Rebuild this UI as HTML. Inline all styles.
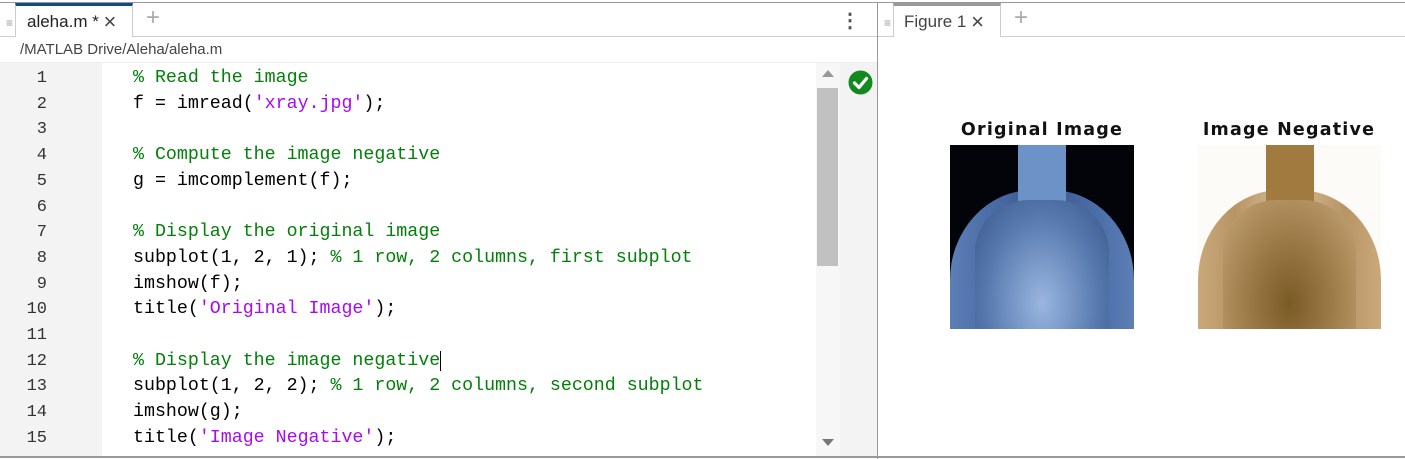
<!DOCTYPE html>
<html><head><style>
body{margin:0;width:1405px;height:459px;overflow:hidden;background:#fff;font-family:"Liberation Sans",sans-serif;position:relative}
.a{position:absolute}
.code{font-family:"Liberation Mono",monospace;font-size:18.3px;color:#000;white-space:pre;line-height:25.7px}
.c{color:#028009}.s{color:#a709f5}
.ln{font-family:"Liberation Mono",monospace;font-size:17px;color:#333;line-height:25.7px;text-align:right;width:47px}
.t{font-family:'DejaVu Sans',sans-serif;font-weight:bold;font-size:17.5px;letter-spacing:1.2px;color:#111;text-align:center;width:240px}
.x{font-size:22px;line-height:17px;vertical-align:-2px}
</style></head><body>
<div class="a" style="left:0;top:2px;width:1405px;height:1px;background:#999"></div>
<div class="a" style="left:0;top:36px;width:877px;height:1px;background:#ccc"></div>
<div class="a" style="left:6px;top:16px;color:#999;font-size:12px">≡</div>
<div class="a" style="left:15px;top:3px;width:118px;height:34px;background:#fff;border-left:1px solid #ccc;border-right:1px solid #ccc;border-top:3px solid #0f4c81;box-sizing:border-box"></div>
<div class="a" style="left:27px;top:12px;font-size:17px;line-height:20px;color:#222">aleha.m * <span class="x" style="color:#444">×</span></div>
<div class="a" style="left:146px;top:4px;font-size:24px;color:#aaa">+</div>
<div class="a" style="left:840px;top:8px;font-size:20px;color:#555;font-weight:bold">⋮</div>
<div class="a" style="left:20px;top:41px;font-size:15px;color:#444">/MATLAB Drive/Aleha/aleha.m</div>
<div class="a" style="left:0;top:62px;width:877px;height:1px;background:#eee"></div>
<div class="a" style="left:0;top:63px;width:102px;height:394px;background:#f3f3f3"></div>
<div class="a ln" style="left:0;top:66px">1<br>2<br>3<br>4<br>5<br>6<br>7<br>8<br>9<br>10<br>11<br>12<br>13<br>14<br>15</div>
<div class="a code" style="left:133px;top:66px"><span class="c">% Read the image</span>
f = imread(<span class="s">'xray.jpg'</span>);

<span class="c">% Compute the image negative</span>
g = imcomplement(f);

<span class="c">% Display the original image</span>
subplot(1, 2, 1); <span class="c">% 1 row, 2 columns, first subplot</span>
imshow(f);
title(<span class="s">'Original Image'</span>);

<span class="c">% Display the image negative</span><span style="border-left:1px solid #000"></span>
subplot(1, 2, 2); <span class="c">% 1 row, 2 columns, second subplot</span>
imshow(g);
title(<span class="s">'Image Negative'</span>);</div>
<div class="a" style="left:816px;top:63px;width:24px;height:394px;background:#f7f7f7"></div>
<div class="a" style="left:817px;top:88px;width:21px;height:178px;background:#c1c1c1"></div>
<div class="a" style="left:822px;top:70px;width:0;height:0;border-left:6px solid transparent;border-right:6px solid transparent;border-bottom:7px solid #999"></div>
<div class="a" style="left:822px;top:439px;width:0;height:0;border-left:6px solid transparent;border-right:6px solid transparent;border-top:7px solid #777"></div>
<div class="a" style="left:840px;top:63px;width:37px;height:394px;background:#f3f3f3"></div>
<svg class="a" style="left:848px;top:70px" width="25" height="25"><circle cx="12.5" cy="12.5" r="12" fill="#138a1f"/><path d="M6.5 13 L11 17.5 L18.5 8.5" stroke="#fff" stroke-width="3.2" fill="none" stroke-linecap="round" stroke-linejoin="round"/></svg>
<div class="a" style="left:877px;top:2px;width:1px;height:457px;background:#999"></div>
<div class="a" style="left:0;top:456px;width:1405px;height:2px;background:#999"></div>
<div class="a" style="left:878px;top:36px;width:527px;height:1px;background:#ccc"></div>
<div class="a" style="left:884px;top:16px;color:#999;font-size:12px">≡</div>
<div class="a" style="left:893px;top:3px;width:108px;height:34px;background:#fff;border-left:1px solid #ccc;border-right:1px solid #ccc;border-top:3px solid #999;box-sizing:border-box"></div>
<div class="a" style="left:904px;top:12px;font-size:17px;line-height:20px;color:#444">Figure 1 <span class="x">×</span></div>
<div class="a" style="left:1014px;top:4px;font-size:24px;color:#aaa">+</div>
<div class="a t" style="left:922px;top:120px">Original Image</div>
<div class="a t" style="left:1169px;top:120px">Image Negative</div>
<div class="a" style="left:950px;top:145px;width:184px;height:184px;background:#02040a;overflow:hidden">
 <div class="a" style="left:0;top:45px;width:184px;height:200px;border-radius:45% 45% 0 0;background:linear-gradient(90deg,#5d7fb5,#4c6ea8 20%,#38568a 50%,#4c6ea8 80%,#5d7fb5)"></div>
 <div class="a" style="left:68px;top:0;width:48px;height:184px;background:#6d92c8"></div>
 <div class="a" style="left:25px;top:55px;width:134px;height:129px;border-radius:40% 40% 0 0;background:radial-gradient(ellipse at 50% 80%,#9ab6e0,#5678ad 60%,#3a5788)"></div>
</div>
<div class="a" style="left:1198px;top:145px;width:183px;height:184px;background:#fdfbf8;overflow:hidden">
 <div class="a" style="left:0;top:45px;width:183px;height:200px;border-radius:45% 45% 0 0;background:linear-gradient(90deg,#c9a97a,#b89465 20%,#d9c09a 50%,#b89465 80%,#c9a97a)"></div>
 <div class="a" style="left:68px;top:0;width:48px;height:184px;background:#a17a40"></div>
 <div class="a" style="left:25px;top:55px;width:133px;height:129px;border-radius:40% 40% 0 0;background:radial-gradient(ellipse at 50% 80%,#7a5a25,#a88655 60%,#c7a878)"></div>
</div>
</body></html>
